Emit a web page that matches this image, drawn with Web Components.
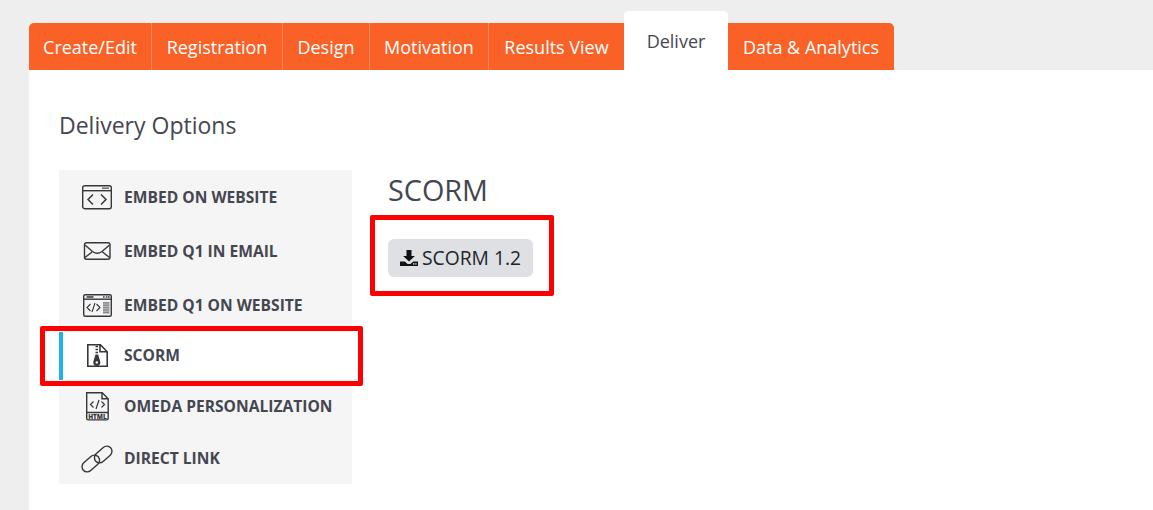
<!DOCTYPE html>
<html lang="en">
<head>
<meta charset="utf-8">
<title>Deliver</title>
<style>
  html, body { margin: 0; height: 100%; overflow: hidden; }
  body { background: #eeeeee; font-family: "Open Sans", "Liberation Sans", sans-serif; color: #444750; }
</style>
</head>
<body>
<app-page>
  <tab-bar>
    <tab-item w="123">Create/Edit</tab-item>
    <tab-item w="131">Registration</tab-item>
    <tab-item w="87">Design</tab-item>
    <tab-item w="119">Motivation</tab-item>
    <tab-item w="135" plain>Results View</tab-item>
    <tab-item w="104" active>Deliver</tab-item>
    <tab-item w="166" last>Data &amp; Analytics</tab-item>
  </tab-bar>
  <delivery-panel heading="Delivery Options">
    <option-list slot="nav">
      <option-item h="54" label="EMBED ON WEBSITE">
        <svg slot="icon" width="32" height="26" viewBox="0 0 32 26" fill="none" stroke="#36373b" stroke-width="1.4">
          <rect x="1.7" y="1.7" width="28.6" height="23" rx="2"/>
          <path d="M2 6.7h28"/>
          <path d="M21 4.2h7" stroke="#777" stroke-width="1.7"/>
          <path d="M12 10.5l-5 5 5 5M20 10.5l5 5-5 5" stroke-width="1.5"/>
        </svg>
      </option-item>
      <option-item h="54" label="EMBED Q1 IN EMAIL">
        <svg slot="icon" width="32" height="26" viewBox="0 0 32 26" fill="none" stroke="#36373b" stroke-width="1.4">
          <rect x="3.5" y="4.7" width="25.5" height="16.6" rx="2"/>
          <path d="M4 7l7.5 6.5q4.8 3.6 9.5 0L28.5 7M4 19.5l7-5.5M28.5 19.5l-7-5.5"/>
        </svg>
      </option-item>
      <option-item h="54" label="EMBED Q1 ON WEBSITE">
        <svg slot="icon" width="32" height="26" viewBox="0 0 32 26" fill="none" stroke="#36373b" stroke-width="1.4">
          <rect x="2.7" y="2.7" width="27.6" height="21.6" rx="1.5"/>
          <path d="M3 7.2h27"/>
          <path d="M5.5 5h7M22 5h1.6M24.8 5h1.6M27 5h1.6" stroke-width="1.5"/>
          <path d="M9.5 12l-3.5 3.5 3.5 3.5M15.5 12l3.5 3.5-3.5 3.5M14 11l-3 9" stroke-width="1.1"/>
          <rect x="22" y="10" width="6.4" height="11.5" fill="#8a8a8c" stroke="none"/>
          <path d="M22 12h6.4M22 14.4h6.4M22 16.8h6.4M22 19.2h6.4" stroke="#d5d5d5" stroke-width=".7"/>
        </svg>
      </option-item>
      <option-item h="48" active label="SCORM">
        <svg slot="icon" width="32" height="26" viewBox="0 0 32 26" fill="none" stroke="#36373b" stroke-width="1.6">
          <path d="M6.8 2.8h12.6l6.8 7v14.4H6.8z"/>
          <path d="M19 2.8v7h7"/>
          <path d="M14.5 4.5h2.5M14.5 7.5h2.5M14.5 10.5h2.5" stroke-width="1.3"/>
          <path d="M14.5 12.5h2.6l2 6.5a3.6 3.6 0 1 1-6.6 0z" fill="#36373b" stroke="none"/>
          <circle cx="15.8" cy="20.4" r="1.2" fill="#fff" stroke="none"/>
        </svg>
      </option-item>
      <option-item h="52" label="OMEDA PERSONALIZATION">
        <svg slot="icon" width="32" height="30" viewBox="0 0 32 30" fill="none" stroke="#36373b" stroke-width="1.4">
          <path d="M5.7 1.7h15.5l6 6v19.6a1.6 1.6 0 0 1-1.6 1.6H7.3a1.6 1.6 0 0 1-1.6-1.6z"/>
          <path d="M21 1.7v6h6M5.7 21.5h21.5"/>
          <path d="M12.5 10.5l-3 3 3 3M20.5 10.5l3 3-3 3M18 9l-3 9" stroke-width="1.2"/>
          <text x="16.5" y="27.5" font-family="Open Sans, sans-serif" font-size="6.4" font-weight="800" text-anchor="middle" fill="#36373b" stroke="none">HTML</text>
        </svg>
      </option-item>
      <option-item h="52" label="DIRECT LINK">
        <svg slot="icon" width="32" height="30" viewBox="0 0 32 30" fill="none" stroke="#36373b" stroke-width="1.4">
          <rect x="-10" y="-5.2" width="20" height="10.4" rx="5.2" transform="translate(9.8 20.5) rotate(-42)"/>
          <rect x="-10" y="-5.2" width="20" height="10.4" rx="5.2" transform="translate(22.2 11.5) rotate(-42)"/>
        </svg>
      </option-item>
    </option-list>
    <scorm-pane slot="content" heading="SCORM">
      <download-button>SCORM 1.2</download-button>
    </scorm-pane>
  </delivery-panel>
</app-page>

<script>
"use strict";

class AppPage extends HTMLElement {
  constructor() {
    super();
    this.attachShadow({ mode: "open" });
    this.shadowRoot.innerHTML = `
      <style>
        :host { display: flex; flex-direction: column; height: 510px; }
      </style>
      <slot></slot>`;
  }
}

class TabBar extends HTMLElement {
  constructor() {
    super();
    this.attachShadow({ mode: "open" });
    this.shadowRoot.innerHTML = `
      <style>
        :host { display: flex; align-items: flex-end; height: 59px; padding: 11px 0 0 29px; flex: none; }
      </style>
      <slot></slot>`;
  }
}

class TabItem extends HTMLElement {
  constructor() {
    super();
    this.attachShadow({ mode: "open" });
    this.shadowRoot.innerHTML = `
      <style>
        :host {
          display: flex; align-items: center; justify-content: center; box-sizing: border-box;
          height: 47px;
          background: #f96127; color: #fff;
          font-size: 18px; white-space: nowrap;
          border-right: 1px solid #fb8a5f;
        }
        :host(:first-child) { border-top-left-radius: 5px; }
        :host([plain]) { border-right: 0; }
        :host([last]) { border-right: 0; border-top-right-radius: 5px; }
        :host([active]) {
          height: 59px;
          background: #fff; color: #444750;
          border-right: 0; border-radius: 4px 4px 0 0;
        }
      </style>
      <slot></slot>`;
    this.style.width = this.getAttribute("w") + "px";
  }
}

class DeliveryPanel extends HTMLElement {
  constructor() {
    super();
    this.attachShadow({ mode: "open" });
    this.shadowRoot.innerHTML = `
      <style>
        :host { display: block; flex: 1; margin-left: 29px; padding: 40px 0 0 30px; background: #fff; }
        h2 { margin: 0 0 29px; font-size: 23px; font-weight: 400; line-height: 31px; color: #444750; }
        .cols { display: flex; align-items: flex-start; }
      </style>
      <h2></h2>
      <div class="cols">
        <slot name="nav"></slot>
        <slot name="content"></slot>
      </div>`;
    this.shadowRoot.querySelector("h2").textContent = this.getAttribute("heading");
  }
}

class OptionList extends HTMLElement {
  constructor() {
    super();
    this.attachShadow({ mode: "open" });
    this.shadowRoot.innerHTML = `
      <style>
        :host { display: flex; flex-direction: column; width: 293px; flex: none; background: #f5f5f5; }
      </style>
      <slot></slot>`;
  }
}

class OptionItem extends HTMLElement {
  constructor() {
    super();
    this.attachShadow({ mode: "open" });
    this.shadowRoot.innerHTML = `
      <style>
        :host {
          display: flex; align-items: center; gap: 11px; position: relative;
          box-sizing: border-box; padding-left: 22px;
          font-size: 15.6px; font-weight: 700; color: #444750; white-space: nowrap;
        }
        :host([active]) { background: #fff; border-left: 4px solid #1fb1ec; padding: 0 0 2px 18px; }
        .icon { display: flex; justify-content: center; width: 32px; flex: none; }
        .mark { display: none; }
        :host([active]) .mark {
          display: block; position: absolute; left: -23px; right: -11px; top: -6px; bottom: -6px;
          border: 5px solid #fe0000; border-radius: 2px; pointer-events: none;
        }
      </style>
      <span class="icon"><slot name="icon"></slot></span>
      <span class="label"></span>
      <span class="mark"></span>`;
    this.shadowRoot.querySelector(".label").textContent = this.getAttribute("label");
    this.style.height = this.getAttribute("h") + "px";
  }
}

class ScormPane extends HTMLElement {
  constructor() {
    super();
    this.attachShadow({ mode: "open" });
    this.shadowRoot.innerHTML = `
      <style>
        :host { display: block; padding-left: 36px; }
        h3 { margin: 0 0 30px; font-size: 28.8px; font-weight: 400; line-height: 39px; color: #444750; }
      </style>
      <h3></h3>
      <slot></slot>`;
    this.shadowRoot.querySelector("h3").textContent = this.getAttribute("heading");
  }
}

class DownloadButton extends HTMLElement {
  constructor() {
    super();
    this.attachShadow({ mode: "open" });
    this.shadowRoot.innerHTML = `
      <style>
        :host {
          display: inline-flex; align-items: center; gap: 4px; position: relative;
          box-sizing: border-box; height: 38px; padding: 0 12px 1px;
          background: #dfe0e4; border-radius: 6px;
          font-size: 19.3px; color: #212529; white-space: nowrap;
        }
        svg { display: block; }
        .mark {
          position: absolute; left: -18px; right: -21px; top: -24px; bottom: -19px;
          border: 5px solid #fe0000; border-radius: 2px; pointer-events: none;
        }
      </style>
      <svg width="18" height="16" viewBox="0 0 18 16" fill="#111">
        <path d="M6.5 0h5v6h3.4L9 11.6 3.1 6h3.4z"/>
        <path d="M0 11.5h4.8L7.6 14h2.8l2.8-2.5H18V16H0z"/>
        <rect x="13" y="13.2" width="1.4" height="1.4" fill="#dfe0e4"/>
        <rect x="15.2" y="13.2" width="1.4" height="1.4" fill="#dfe0e4"/>
      </svg>
      <slot></slot>
      <span class="mark"></span>`;
  }
}

customElements.define("app-page", AppPage);
customElements.define("tab-bar", TabBar);
customElements.define("tab-item", TabItem);
customElements.define("delivery-panel", DeliveryPanel);
customElements.define("option-list", OptionList);
customElements.define("option-item", OptionItem);
customElements.define("scorm-pane", ScormPane);
customElements.define("download-button", DownloadButton);
</script>
</body>
</html>
